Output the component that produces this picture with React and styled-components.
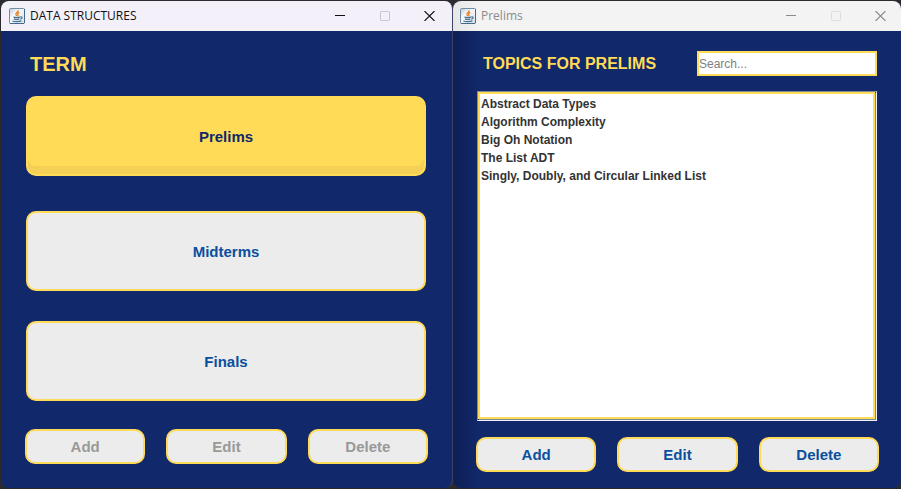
import React, { useState } from "react";
import styled, { createGlobalStyle, css } from "styled-components";

const navy = "#11286a";
const gold = "#ffdb58";

const GlobalStyle = createGlobalStyle`
  * { box-sizing: border-box; }
  body { margin: 0; background: #2b2b2e; font-family: "Liberation Sans", Arial, sans-serif; }
  button, input { font-family: inherit; margin: 0; }
`;

const Desktop = styled.main`
  display: grid;
  grid-template-columns: 113fr 112fr;
  min-height: 100vh;
  padding: 1px 0 1px 1px;
`;

const Frame = styled.section`
  display: flex;
  flex-direction: column;
  min-width: 0;
  overflow: hidden;
  border-radius: 8px;
  background: ${navy};
  ${(p) =>
    p.$active
      ? css`
          border-right: 1px solid #3c4363;
        `
      : css`
          background: linear-gradient(to right, #0d1f55, ${navy} 26px);
        `}
`;

const TitleBar = styled.header`
  display: flex;
  align-items: center;
  flex: none;
  height: 30px;
  padding-left: ${(p) => (p.$active ? "8px" : "7px")};
  margin-right: ${(p) => (p.$active ? "0" : "-2px")};
  background: ${(p) => (p.$active ? "#f3f0f9" : "linear-gradient(to right, #e6e6e6, #f3f3f3 26px)")};
  color: ${(p) => (p.$active ? "#111" : "#8b8b8b")};
`;

const Caption = styled.h1`
  flex: 1;
  margin: 0 0 0 5px;
  font: 400 12px/18px "Open Sans", sans-serif;
`;

const CaptionButton = styled.button`
  display: grid;
  place-items: center;
  width: 45px;
  height: 30px;
  padding: 0;
  border: 0;
  background: none;
  color: inherit;

  &:disabled { color: ${(p) => (p.$active ? "#c9c6cf" : "#dedede")}; }
`;

const Body = styled.div`
  display: flex;
  flex-direction: column;
  flex: 1;
  padding: ${(p) => (p.$list ? "20px 22px 16px 23px" : "20px 24px 24px 24px")};
`;

const Heading = styled.h2`
  margin: 0;
  padding-left: ${(p) => (p.$small ? "7px" : "5px")};
  color: ${gold};
  font-size: ${(p) => (p.$small ? "16px" : "20px")};
  line-height: 26px;
  white-space: nowrap;
`;

const TermList = styled.div`
  display: flex;
  flex-direction: column;
  gap: 30px;
  margin: 19px 2px 28px 1px;
`;

const PanelButton = styled.button`
  border: 2px solid ${gold};
  border-radius: 10px;
  padding: 0;
  background: #ececec;
  color: #0a4f9e;
  font-size: 15px;
  font-weight: 700;
  line-height: 18px;

  &:disabled { color: #999; }
`;

const TermButton = styled(PanelButton)`
  height: 80px;
  padding-top: 2px;
  ${(p) =>
    p.$selected &&
    css`
      margin-bottom: 5px;
      background: ${gold};
      color: ${navy};
      box-shadow: inset 0 -8px 0 #f4d057;
    `}
`;

const Actions = styled.div`
  display: grid;
  grid-template-columns: repeat(3, 1fr);
  gap: 21px;
`;

const ActionButton = styled(PanelButton)`
  height: 35px;
`;

const TopicHeader = styled.div`
  display: flex;
  justify-content: space-between;
  gap: 20px;
  padding-right: 2px;
`;

const Search = styled.input`
  flex: 0 1 180px;
  min-width: 0;
  height: 25px;
  padding: 0;
  border: 2px solid ${gold};
  border-radius: 0;
  background: #fff;
  color: #333;
  font-size: 12px;

  &::placeholder { color: #808080; opacity: 1; }
`;

const TopicPane = styled.div`
  display: flex;
  flex: 1;
  margin: 14px 2px 16px 1px;
  border: 1px solid #7a8a99;
  border-right-color: #eef1f5;
  border-bottom-color: #eef1f5;
`;

const Topics = styled.ul`
  flex: 1;
  margin: 0 1px 1px 0;
  padding: 1px;
  list-style: none;
  border: 2px solid ${gold};
  background: #fff;
  box-shadow: 1px 1px 0 #7a8a99;
`;

const Topic = styled.li`
  color: #333;
  font-size: 12px;
  font-weight: 700;
  line-height: 18px;
`;

function JavaIcon() {
  return (
    <svg width="16" height="16" viewBox="0 0 16 16" fill="none" aria-hidden="true">
      <defs>
        <linearGradient id="tile" x1="0" y1="0" x2="1" y2="1">
          <stop offset="0" stopColor="#b9c9d6" />
          <stop offset=".35" stopColor="#f8f9fa" />
          <stop offset="1" stopColor="#d8e0e8" />
        </linearGradient>
      </defs>
      <rect x=".5" y=".5" width="15" height="15" rx="1" fill="url(#tile)" stroke="#6d8da6" />
      <path d="M1 15.5h14M15.5 1v14" stroke="#426b8a" />
      <path d="M9.3 2c.5 2-3.1 2.7-2.4 4.6.2.6.7 1 .9 1.500M10.300 4.400C8.700 5.200 8 6 9 7c.4.5.1.9-.4 1.300" stroke="#e77c24" strokeWidth="1.2" />
      <path d="M4.500 9.100c1 .6 5 .6 6.500 0M5 10.900c1 .5 4 .5 5.200 0M11.300 8.800c2.500-.4 2.200 2-.1 2.400M3.400 13c2 .8 6.800.8 9-.1" stroke="#43718f" strokeWidth="1.2" />
    </svg>
  );
}

function WindowBar({ title, active }) {
  return (
    <TitleBar $active={active}>
      <JavaIcon />
      <Caption>{title}</Caption>
      <CaptionButton aria-label="Minimize">
        <svg width="10" height="10" viewBox="0 0 10 10" stroke="currentColor"><path d="M0 4.500h10" /></svg>
      </CaptionButton>
      <CaptionButton aria-label="Maximize" disabled $active={active}>
        <svg width="10" height="10" viewBox="0 0 10 10" fill="none" stroke="currentColor"><rect x=".5" y=".5" width="9" height="9" rx=".5" /></svg>
      </CaptionButton>
      <CaptionButton aria-label="Close">
        <svg width="11" height="10" viewBox="0 0 11 10" stroke="currentColor" strokeWidth="1.1"><path d="M.5 0l10 10M10.500 0l-10 10" /></svg>
      </CaptionButton>
    </TitleBar>
  );
}

function ActionRow({ disabled }) {
  return (
    <Actions>
      {["Add", "Edit", "Delete"].map((name) => (
        <ActionButton key={name} disabled={disabled}>{name}</ActionButton>
      ))}
    </Actions>
  );
}

const topics = [
  "Abstract Data Types",
  "Algorithm Complexity",
  "Big Oh Notation",
  "The List ADT",
  "Singly, Doubly, and Circular Linked List",
];

export default function App() {
  const [query, setQuery] = useState("");
  const shown = topics.filter((t) => t.toLowerCase().includes(query.toLowerCase()));
  return (
    <>
      <GlobalStyle />
      <Desktop>
        <Frame $active>
          <WindowBar title="DATA STRUCTURES" active />
          <Body>
            <Heading>TERM</Heading>
            <TermList>
              <TermButton $selected>Prelims</TermButton>
              <TermButton>Midterms</TermButton>
              <TermButton>Finals</TermButton>
            </TermList>
            <ActionRow disabled />
          </Body>
        </Frame>
        <Frame>
          <WindowBar title="Prelims" />
          <Body $list>
            <TopicHeader>
              <Heading $small>TOPICS FOR PRELIMS</Heading>
              <Search
                type="text"
                aria-label="Search topics"
                placeholder="Search..."
                value={query}
                onChange={(e) => setQuery(e.target.value)}
              />
            </TopicHeader>
            <TopicPane>
              <Topics>
                {shown.map((t) => <Topic key={t}>{t}</Topic>)}
              </Topics>
            </TopicPane>
            <ActionRow />
          </Body>
        </Frame>
      </Desktop>
    </>
  );
}
